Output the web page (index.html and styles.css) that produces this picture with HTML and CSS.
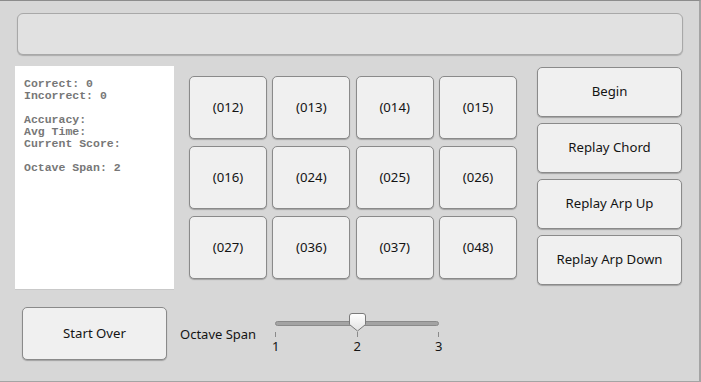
FILE: index.html
```html
<!DOCTYPE html>
<html lang="en">
<head>
    <meta charset="UTF-8">
    <title>Chord Trainer</title>
    <link rel="stylesheet" href="styles.css">
</head>
<body>
    <div class="app">
        <!-- Message bar -->
        <div class="topbar"></div>

        <div class="main">
            <!-- Stats -->
            <div class="stats">
                <div>Correct: 0</div>
                <div>Incorrect: 0</div>
                <div class="blank"></div>
                <div>Accuracy:</div>
                <div>Avg Time:</div>
                <div>Current Score:</div>
                <div class="blank"></div>
                <div>Octave Span: 2</div>
            </div>

            <!-- Chord answer buttons -->
            <div class="chords">
                <button class="btn">(012)</button>
                <button class="btn">(013)</button>
                <button class="btn">(014)</button>
                <button class="btn">(015)</button>
                <button class="btn">(016)</button>
                <button class="btn">(024)</button>
                <button class="btn">(025)</button>
                <button class="btn">(026)</button>
                <button class="btn">(027)</button>
                <button class="btn">(036)</button>
                <button class="btn">(037)</button>
                <button class="btn">(048)</button>
            </div>

            <!-- Controls -->
            <div class="side">
                <button class="btn">Begin</button>
                <button class="btn">Replay Chord</button>
                <button class="btn">Replay Arp Up</button>
                <button class="btn">Replay Arp Down</button>
            </div>
        </div>

        <div class="bottom">
            <button class="btn start">Start Over</button>
            <span class="span-label">Octave Span</span>
            <div class="slider">
                <div class="track"></div>
                <svg class="thumb" width="17" height="19" viewBox="0 0 17 19">
                    <defs>
                        <linearGradient id="tg" x1="0" y1="0" x2="0" y2="1">
                            <stop offset="0" stop-color="#ffffff"/>
                            <stop offset="1" stop-color="#e2e2e2"/>
                        </linearGradient>
                    </defs>
                    <path d="M3,0.5 H14 Q16.5,0.5 16.5,3 V11.5 L8.5,18 L0.5,11.5 V3 Q0.5,0.5 3,0.5 Z" fill="url(#tg)" stroke="#7a7a7a"/>
                </svg>
                <div class="ticks">
                    <div class="tick"><i></i><span>1</span></div>
                    <div class="tick"><i></i><span>2</span></div>
                    <div class="tick"><i></i><span>3</span></div>
                </div>
            </div>
        </div>
    </div>
</body>
</html>
```

FILE: styles.css
```css
body {
    margin: 0;
    font-family: "Noto Sans", "DejaVu Sans", sans-serif;
}

/* Window */
.app {
    width: 701px;
    height: 382px;
    box-sizing: border-box;
    background-color: #d7d7d7;
    border-top: 1px solid #8c8c8c;
    border-right: 2px solid #a4a4a4;
    border-bottom: 1px solid #a4a4a4;
    overflow: hidden;
}

/* Top message bar */
.topbar {
    margin: 12px 16px 0 17px;
    height: 42px;
    box-sizing: border-box;
    background-color: #e1e1e1;
    border: 1px solid #a8a8a8;
    border-radius: 6px;
    box-shadow: 0 1px 1px rgba(0, 0, 0, 0.2);
}

.main {
    display: flex;
    align-items: flex-start;
    margin-top: 11px;
    padding-left: 15px;
}

/* Stats panel */
.stats {
    width: 159px;
    height: 224px;
    box-sizing: border-box;
    padding: 12px 9px;
    background-color: #ffffff;
    border-bottom: 1px solid #c9c9c9;
    font-family: "Liberation Mono", monospace;
    font-weight: bold;
    font-size: 11.5px;
    line-height: 12px;
    color: #777;
}

.stats .blank {
    height: 12px;
}

/* Buttons */
.btn {
    box-sizing: border-box;
    padding: 0 0 2px;
    background-color: #f0f0f0;
    border: 1px solid #8a8a8a;
    border-radius: 5px;
    box-shadow: 0 1px 1px rgba(0, 0, 0, 0.25);
    font-family: "Noto Sans", "DejaVu Sans", sans-serif;
    font-size: 13.2px;
    color: #141414;
}

.chords {
    display: grid;
    grid-template-columns: repeat(4, 78px);
    grid-auto-rows: 63px;
    column-gap: 5.33px;
    row-gap: 7px;
    margin-top: 10px;
    margin-left: 15px;
}

.side {
    display: flex;
    flex-direction: column;
    gap: 6px;
    margin-top: 1px;
    margin-left: 20px;
}

.side .btn {
    width: 145px;
    height: 50px;
}

/* Bottom row */
.bottom {
    display: flex;
    align-items: center;
    margin-top: 17px;
    padding-left: 22px;
}

.start {
    width: 145px;
    height: 53px;
}

.span-label {
    margin-left: 13px;
    font-size: 13px;
    color: #141414;
}

/* Octave slider */
.slider {
    position: relative;
    width: 164px;
    height: 44px;
    margin-left: 19px;
    margin-top: 6px;
}

.track {
    margin-top: 6px;
    height: 5px;
    box-sizing: border-box;
    background-color: #a3a3a3;
    border: 1px solid #8a8a8a;
    border-radius: 3px;
}

.thumb {
    position: absolute;
    left: 74px;
    top: -2px;
}

.ticks {
    display: flex;
    justify-content: space-between;
    margin-top: 6px;
}

.tick {
    display: flex;
    flex-direction: column;
    align-items: center;
    width: 1px;
}

.tick i {
    width: 1px;
    height: 5px;
    background-color: #8a8a8a;
}

.tick span {
    font-size: 13px;
    line-height: 18px;
    color: #141414;
}
```
